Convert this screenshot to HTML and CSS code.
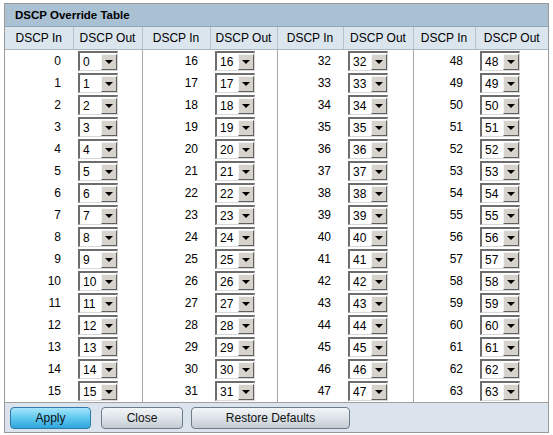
FILE: index.html
```html
<!DOCTYPE html>
<html>
<head>
<meta charset="utf-8">
<link rel="stylesheet" href="styles.css">
</head>
<body>
<div class="panel">
  <div class="title">DSCP Override Table</div>
  <table class="grid">
    <colgroup>
      <col class="c1"><col class="c2"><col class="c3"><col class="c4"><col class="c5"><col class="c6"><col class="c7"><col class="c8">
    </colgroup>
    <thead>
      <tr><th>DSCP In</th><th>DSCP Out</th><th>DSCP In</th><th>DSCP Out</th><th>DSCP In</th><th>DSCP Out</th><th>DSCP In</th><th>DSCP Out</th></tr>
    </thead>
    <tbody id="rows"></tbody>
  </table>
  <div class="bar">
    <button class="btn primary">Apply</button>
    <button class="btn close">Close</button>
    <button class="btn restore">Restore Defaults</button>
  </div>
</div>
<script src="app.js"></script>
</body>
</html>
```
FILE: styles.css
```css
html, body { margin: 0; padding: 0; background: #fff; }
body { font-family: "Liberation Sans", Arial, sans-serif; font-size: 12px; color: #000; }
.panel {
  margin: 3px 0 0 4px;
  width: 543px;
  border: 1px solid #9a9a9a;
}
.title {
  height: 22px;
  line-height: 22px;
  padding-left: 10px;
  background: #a9c1d3;
  font-weight: bold;
  font-size: 11.5px;
  border-bottom: 1px solid #8fa6b8;
}
.grid { width: 100%; border-collapse: collapse; table-layout: fixed; }
.c1 { width: 68px; } .c2 { width: 69px; } .c3 { width: 68px; } .c4 { width: 67px; }
.c5 { width: 66px; } .c6 { width: 70px; } .c7 { width: 62px; } .c8 { width: 73px; }
.grid th {
  height: 22px;
  padding: 0;
  background: #dbe5ee;
  font-weight: normal;
  text-align: center;
  border-left: 1px solid #b3c3d0;
  border-bottom: 1px solid #a9b6c0;
}
.grid th:first-child { border-left: none; }
.grid td { height: 22px; padding: 0; }
.grid td.in { text-align: right; padding-right: 12px; }
.grid td.out { padding-left: 5px; }
.grid td.grp { border-left: 1px solid #a8a8a8; }
.sel {
  display: inline-flex;
  align-items: center;
  box-sizing: border-box;
  width: 40px;
  height: 20px;
  vertical-align: middle;
  background: #fff;
  border-top: 2px solid #6d6d6d;
  border-left: 2px solid #6d6d6d;
  border-right: 1px solid #d8d8d8;
  border-bottom: 1px solid #d8d8d8;
}
.sel .v { flex: 1; padding-left: 3px; }
.sel .arr {
  position: relative;
  width: 16px;
  height: 16px;
  margin-right: 0;
  box-sizing: border-box;
  background: #d6d3cc;
  border-top: 1px solid #f4f4f4;
  border-left: 1px solid #f4f4f4;
  border-right: 1px solid #5e5e5e;
  border-bottom: 1px solid #5e5e5e;
}
.sel .arr::after {
  content: "";
  position: absolute;
  left: 3px;
  top: 5px;
  border-left: 4px solid transparent;
  border-right: 4px solid transparent;
  border-top: 4px solid #000;
}
.bar {
  height: 29px;
  border-top: 1px solid #a0a0a0;
  background: #dbe4ec;
  display: flex;
  align-items: center;
  padding-left: 5px;
  gap: 10px;
}
.btn {
  height: 22px;
  font-family: "Liberation Sans", Arial, sans-serif;
  font-size: 12px;
  color: #111;
  border-radius: 4px;
  padding: 0;
  border: 1px solid #6d7b88;
  background: linear-gradient(#f3f6f8, #dde3e8 50%, #c4ccd3);
}
.btn.primary {
  width: 81px;
  border-color: #2e7aa8;
  background: linear-gradient(#a7e6fb, #5fc8f0 50%, #2fa6dc);
}
.btn.close { width: 82px; }
.btn.restore { width: 159px; margin-left: -2px; }
```
FILE: app.js
```js
var tb = document.getElementById('rows');
var html = '';
for (var r = 0; r < 16; r++) {
  html += '<tr>';
  for (var g = 0; g < 4; g++) {
    var n = g * 16 + r;
    html += '<td class="in' + (g > 0 ? ' grp' : '') + '">' + n + '</td>';
    html += '<td class="out"><span class="sel"><span class="v">' + n + '</span><span class="arr"></span></span></td>';
  }
  html += '</tr>';
}
tb.innerHTML = html;
```
